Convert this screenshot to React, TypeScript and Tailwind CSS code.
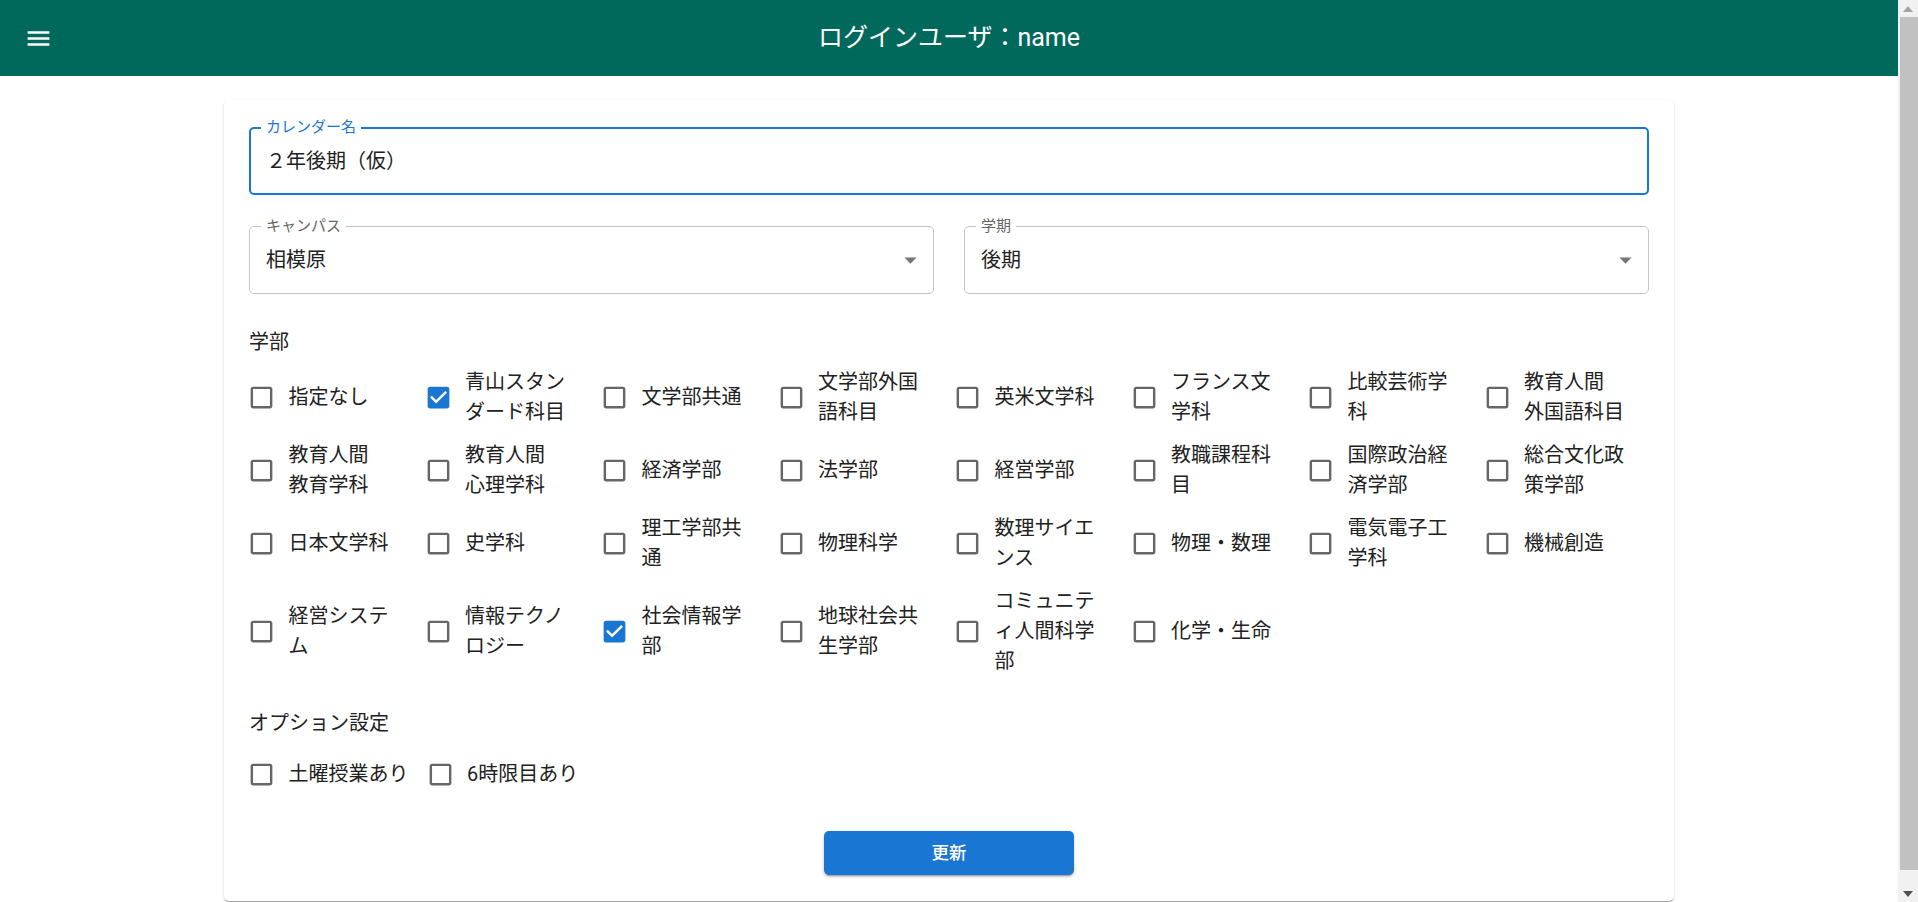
import React from 'react';

type Item = { label: string; checked?: boolean };

const faculties: Item[] = [
  { label: '指定なし' },
  { label: '青山スタンダード科目', checked: true },
  { label: '文学部共通' },
  { label: '文学部外国語科目' },
  { label: '英米文学科' },
  { label: 'フランス文学科' },
  { label: '比較芸術学科' },
  { label: '教育人間 外国語科目' },
  { label: '教育人間 教育学科' },
  { label: '教育人間 心理学科' },
  { label: '経済学部' },
  { label: '法学部' },
  { label: '経営学部' },
  { label: '教職課程科目' },
  { label: '国際政治経済学部' },
  { label: '総合文化政策学部' },
  { label: '日本文学科' },
  { label: '史学科' },
  { label: '理工学部共通' },
  { label: '物理科学' },
  { label: '数理サイエンス' },
  { label: '物理・数理' },
  { label: '電気電子工学科' },
  { label: '機械創造' },
  { label: '経営システム' },
  { label: '情報テクノロジー' },
  { label: '社会情報学部', checked: true },
  { label: '地球社会共生学部' },
  { label: 'コミュニティ人間科学部' },
  { label: '化学・生命' },
];

const BoxIcon = ({ checked }: { checked?: boolean }) =>
  checked ? (
    <svg viewBox="0 0 24 24" className="w-[29px] h-[29px] shrink-0 fill-[#1976d2]">
      <path d="M19 3H5c-1.11 0-2 .9-2 2v14c0 1.1.89 2 2 2h14c1.11 0 2-.9 2-2V5c0-1.1-.89-2-2-2zm-9 14l-5-5 1.41-1.41L10 14.17l7.59-7.59L19 8l-9 9z" />
    </svg>
  ) : (
    <svg viewBox="0 0 24 24" className="w-[29px] h-[29px] shrink-0 fill-[#666666]">
      <path d="M19 5v14H5V5h14m0-2H5c-1.1 0-2 .9-2 2v14c0 1.1.9 2 2 2h14c1.1 0 2-.9 2-2V5c0-1.1-.9-2-2-2z" />
    </svg>
  );

const ArrowDrop = () => (
  <svg viewBox="0 0 24 24" className="absolute right-[8px] top-1/2 -translate-y-1/2 w-[29px] h-[29px] fill-[#757575]">
    <path d="M7 10l5 5 5-5z" />
  </svg>
);

const SelectField = ({ label, value }: { label: string; value: string }) => (
  <div className="relative h-[68px] border border-[#c4c4c4] rounded-[5px] flex items-center pl-[16px]">
    <span className="absolute left-[11px] top-[-10px] px-[5px] bg-white text-[15px] leading-[18px] text-[#666666]">
      {label}
    </span>
    <span className="text-[20px] text-[#212121]">{value}</span>
    <ArrowDrop />
  </div>
);

// browser scrollbar seen at the right edge of the screenshot
const ScrollBar = () => (
  <div className="w-[20px] shrink-0 h-full bg-[#f1f1f1] flex flex-col">
    <div className="h-[17px] flex items-center justify-center">
      <svg viewBox="0 0 10 6" className="w-[10px] h-[6px] fill-[#a3a3a3]">
        <path d="M0 6L5 0l5 6z" />
      </svg>
    </div>
    <div className="flex-1 ml-[2px] bg-[#c1c1c1]" />
    <div className="h-[15px]" />
    <div className="h-[17px] flex items-center justify-center">
      <svg viewBox="0 0 10 6" className="w-[10px] h-[6px] fill-[#505050]">
        <path d="M0 0l5 6 5-6z" />
      </svg>
    </div>
  </div>
);

export default function App() {
  return (
    <div
      lang="ja"
      className="h-screen flex overflow-hidden bg-white font-['Roboto','Noto_Sans_CJK_JP',sans-serif] text-[#212121] [line-break:loose]"
    >
      <div className="flex-1 min-w-0">
        <header className="h-[76px] bg-[#00695c] grid grid-cols-[1fr_auto_1fr] items-center text-white">
          <div className="pl-[24px]">
            <svg viewBox="0 0 24 24" className="w-[29px] h-[29px] fill-white">
              <path d="M3 18h18v-2H3v2zm0-5h18v-2H3v2zm0-7v2h18V6H3z" />
            </svg>
          </div>
          <h1 className="text-[25px] leading-[36px] font-normal">ログインユーザ：name</h1>
          <div />
        </header>

        <main className="w-[1450px] mx-auto mt-[24px] bg-white rounded-[5px] shadow-[0_2px_1px_-1px_rgba(0,0,0,0.2),0_1px_1px_0_rgba(0,0,0,0.14),0_1px_3px_0_rgba(0,0,0,0.12)] px-[25px] pt-[27px] pb-[26px]">
          <div className="relative h-[68px] border-2 border-[#1976d2] rounded-[5px] flex items-center pl-[15px]">
            <span className="absolute left-[10px] top-[-11px] px-[5px] bg-white text-[15px] leading-[18px] text-[#1976d2]">
              カレンダー名
            </span>
            <span className="text-[20px] text-[#212121]">２年後期（仮）</span>
          </div>

          <div className="grid grid-cols-2 gap-x-[30px] mt-[31px]">
            <SelectField label="キャンパス" value="相模原" />
            <SelectField label="学期" value="後期" />
          </div>

          <div className="mt-[33px] text-[20px] leading-[30px]">学部</div>

          <div className="mt-[10px] grid grid-cols-[repeat(8,176.5px)] gap-y-[13px] items-center">
            {faculties.map((f) => (
              <label key={f.label} className="flex items-center">
                <span className="ml-[-2px]">
                  <BoxIcon checked={f.checked} />
                </span>
                <span className="ml-[12.5px] w-[102px] text-[20px] leading-[30px]">{f.label}</span>
              </label>
            ))}
          </div>

          <div className="mt-[32px] text-[20px] leading-[30px]">オプション設定</div>

          <div className="mt-[11px] h-[50px] flex items-center">
            <label className="flex items-center">
              <span className="ml-[-2px]">
                <BoxIcon />
              </span>
              <span className="ml-[12.5px] text-[20px] leading-[30px]">土曜授業あり</span>
            </label>
            <label className="flex items-center ml-[17px]">
              <BoxIcon />
              <span className="ml-[12.5px] text-[20px] leading-[30px]">6時限目あり</span>
            </label>
          </div>

          <div className="mt-[32px] flex justify-center">
            <button className="w-[250px] h-[44px] rounded-[5px] bg-[#1976d2] text-white text-[17.5px] font-medium shadow-[0_3px_1px_-2px_rgba(0,0,0,0.2),0_2px_2px_0_rgba(0,0,0,0.14),0_1px_5px_0_rgba(0,0,0,0.12)]">
              更新
            </button>
          </div>
        </main>
      </div>
      <ScrollBar />
    </div>
  );
}
